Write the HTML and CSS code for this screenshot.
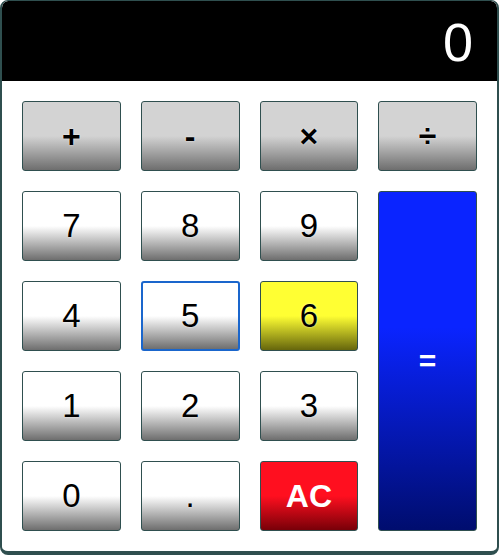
FILE: index.html
```html
<!DOCTYPE html>
<html>
<head>
<meta charset="utf-8">
<link rel="stylesheet" href="styles.css">
</head>
<body>
<div class="calc">
  <div class="display">0</div>
  <div class="keys">
    <button class="key op">+</button>
    <button class="key op">-</button>
    <button class="key op">×</button>
    <button class="key op">÷</button>
    <button class="key">7</button>
    <button class="key">8</button>
    <button class="key">9</button>
    <button class="key eq">=</button>
    <button class="key">4</button>
    <button class="key focus">5</button>
    <button class="key yellow">6</button>
    <button class="key">1</button>
    <button class="key">2</button>
    <button class="key">3</button>
    <button class="key">0</button>
    <button class="key">.</button>
    <button class="key red">AC</button>
  </div>
</div>
</body>
</html>
```
FILE: styles.css
```css
html, body {
  margin: 0;
  padding: 0;
  background: #fff;
}
.calc {
  width: 499px;
  box-sizing: border-box;
  border: 2px solid #2f4f4f;
  border-top-width: 1px;
  border-bottom-width: 4px;
  border-radius: 8px;
  overflow: hidden;
  background: #fff;
}
.display {
  height: 80px;
  background: #000;
  color: #fff;
  font-family: "Liberation Sans", Arial, sans-serif;
  font-size: 54px;
  line-height: 82px;
  text-align: right;
  padding-right: 24px;
  border-top-left-radius: 6px;
  border-top-right-radius: 6px;
}
.keys {
  display: grid;
  grid-template-columns: repeat(4, 1fr);
  grid-auto-rows: 70px;
  gap: 20px;
  padding: 20px 20px 20px 20px;
}
.key {
  margin: 0;
  padding: 0;
  border: 1px solid #2f4f4f;
  border-radius: 3px;
  background: linear-gradient(#ffffff 50%, #6e6e6e);
  font-family: "Liberation Sans", Arial, sans-serif;
  font-size: 33px;
  color: #000;
  text-shadow: 0 0 2px rgba(255, 255, 255, 0.8);
}
.op {
  background: linear-gradient(#d3d3d3 50%, #6e6e6e);
  font-weight: bold;
  font-size: 32px;
}
.eq {
  grid-column: 4;
  grid-row: 2 / span 4;
  background: linear-gradient(#0a24ff 40%, #000d6e);
  color: #fff;
  font-weight: bold;
  font-size: 30px;
  text-shadow: none;
}
.yellow {
  background: linear-gradient(#ffff33 50%, #66660c);
}
.red {
  background: linear-gradient(#ff0f1f 50%, #780008);
  color: #fff;
  font-weight: bold;
  font-size: 32px;
  text-shadow: none;
}
.focus {
  border: 2px solid #1a66cc;
}
```
